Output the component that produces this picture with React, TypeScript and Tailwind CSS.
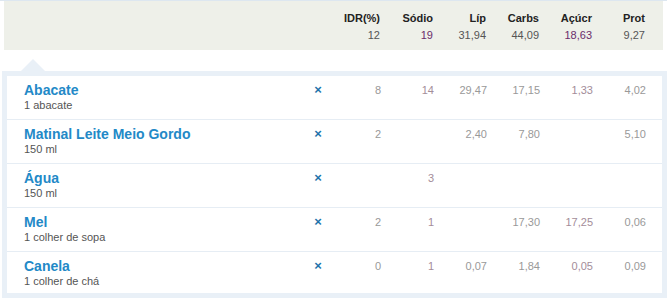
const cols = ["IDR(%)", "Sódio", "Líp", "Carbs", "Açúcr", "Prot"];
const totals = ["12", "19", "31,94", "44,09", "18,63", "9,27"];

const foods = [
  { name: "Abacate", qty: "1 abacate", vals: ["8", "14", "29,47", "17,15", "1,33", "4,02"] },
  { name: "Matinal Leite Meio Gordo", qty: "150 ml", vals: ["2", "", "2,40", "7,80", "", "5,10"] },
  { name: "Água", qty: "150 ml", vals: ["", "3", "", "", "", ""] },
  { name: "Mel", qty: "1 colher de sopa", vals: ["2", "1", "", "17,30", "17,25", "0,06"] },
  { name: "Canela", qty: "1 colher de chá", vals: ["0", "1", "0,07", "1,84", "0,05", "0,09"] },
];

// sódio and açúcar get the purple tint
const tinted = (i: number) => i === 1 || i === 4;

export default function App() {
  return (
    <div className="w-[667px] h-[300px] overflow-hidden bg-white font-['Liberation_Sans',Arial,sans-serif]">
      <div className="border-t border-[#dde7f0]">
        <div className="mx-[4px] h-[49px] bg-[#eef0e9] flex pt-[10px] pr-[18px]">
          <div className="flex-1" />
          {cols.map((c, i) => (
            <div key={c} className="w-[53px] text-right">
              <div className="text-[11px] leading-[14px] font-bold text-[#222]">{c}</div>
              <div
                className={
                  "mt-[3px] text-[11px] leading-[14px] " +
                  (tinted(i) ? "text-[#6b2d6b]" : "text-[#555]")
                }
              >
                {totals[i]}
              </div>
            </div>
          ))}
        </div>
      </div>

      <div className="relative mt-[21px] ml-[2px] bg-[#e9f0f7] p-[5px]">
        <div className="absolute left-[19px] -top-[12px] w-0 h-0 border-x-[12px] border-x-transparent border-b-[12px] border-b-[#e9f0f7]" />
        <div className="bg-white">
          {foods.map((f, r) => (
            <div
              key={f.name}
              className={
                "flex pl-[17px] pr-[16px] pt-[6px] " +
                (r < foods.length - 1 ? "pb-[7px] border-b border-[#e6edf4]" : "pb-[5px]")
              }
            >
              <div className="flex-1">
                <div className="text-[14px] leading-[16px] font-bold text-[#2389c7]">{f.name}</div>
                <div className="text-[11px] leading-[14px] text-[#555]">{f.qty}</div>
              </div>
              <div className="w-[20px] text-center text-[13px] leading-[16px] font-bold text-[#1f73aa]">×</div>
              {f.vals.map((v, i) => (
                <div
                  key={i}
                  className={
                    "w-[53px] text-right text-[11px] leading-[16px] " +
                    (tinted(i) ? "text-[#a38d99]" : "text-[#999]")
                  }
                >
                  {v}
                </div>
              ))}
            </div>
          ))}
        </div>
      </div>
    </div>
  );
}
